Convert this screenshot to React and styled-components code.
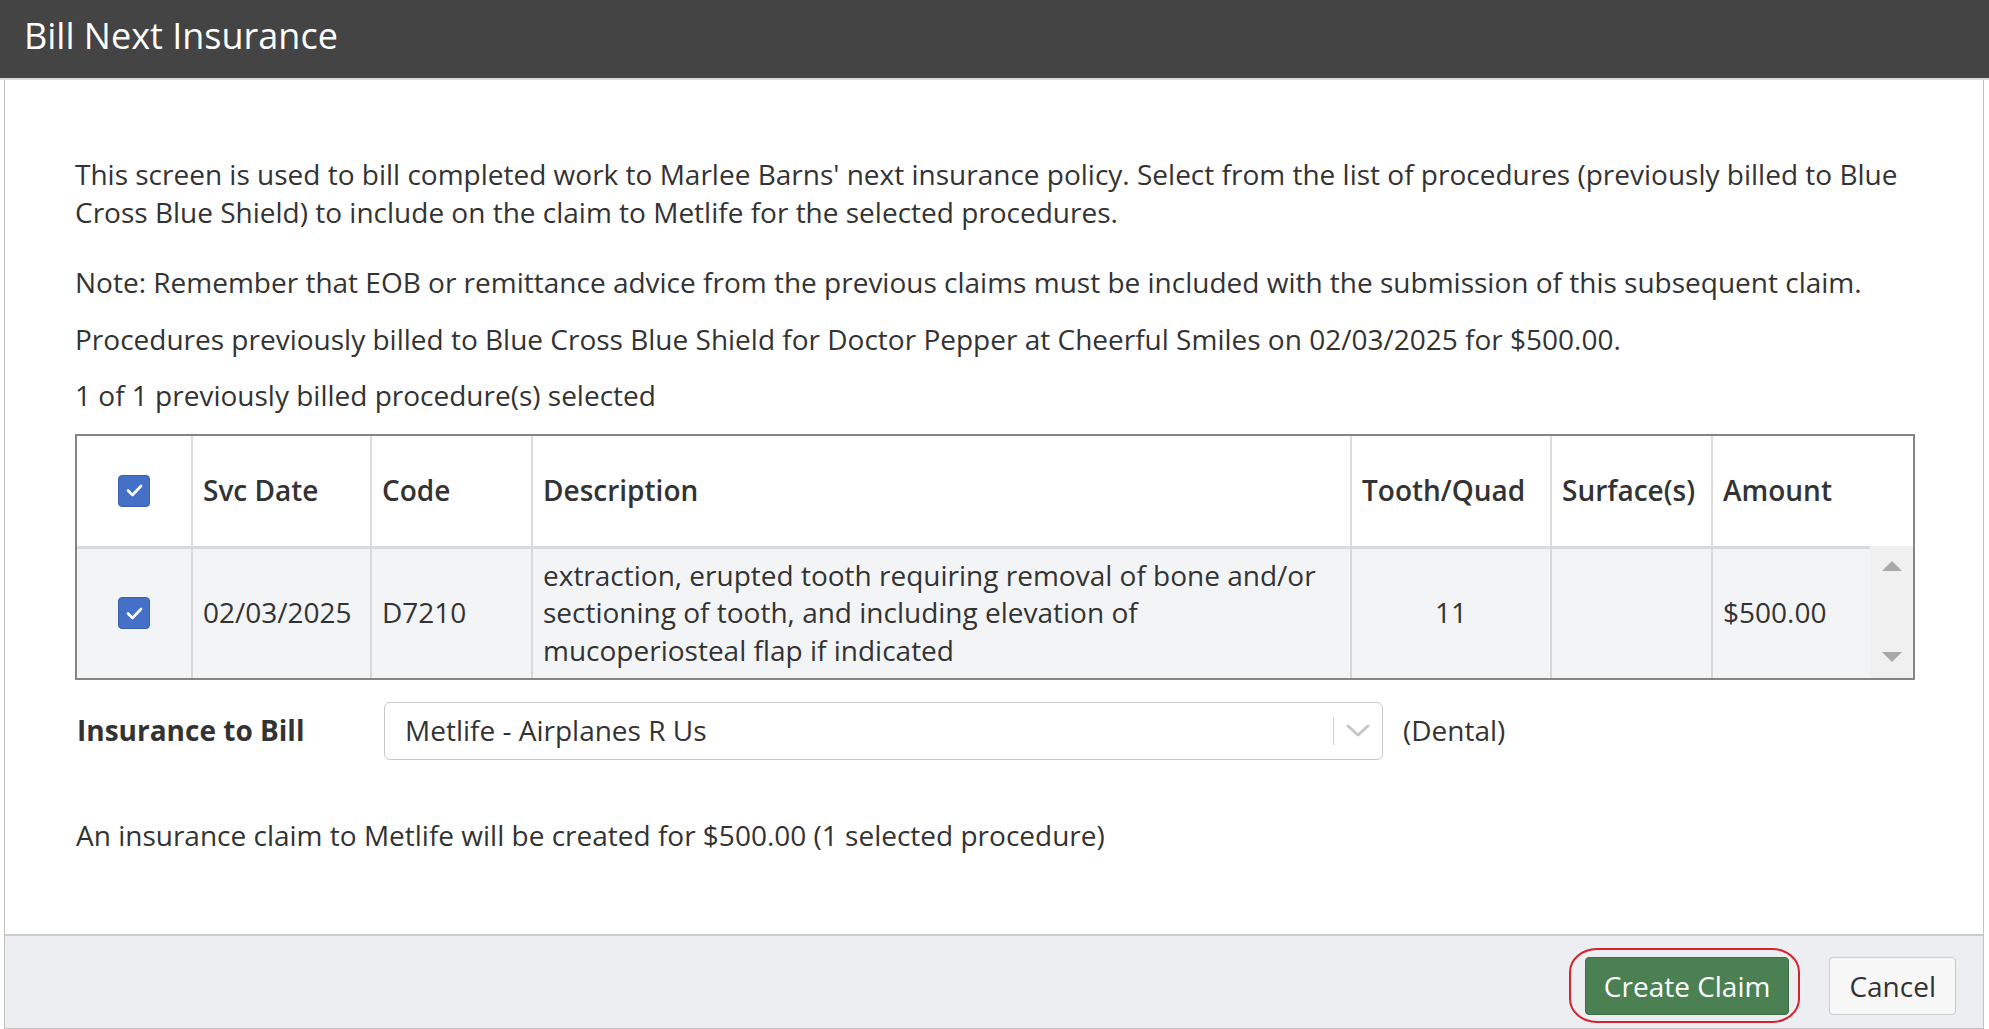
import styled, { createGlobalStyle } from "styled-components";

const GlobalStyle = createGlobalStyle`
  html, body {
    margin: 0;
    padding: 0;
    background: #ffffff;
  }
  body {
    font-family: "Open Sans", "Noto Sans", sans-serif;
    font-size: 28px;
    line-height: 37.5px;
    color: #333333;
  }
  * {
    box-sizing: border-box;
  }
`;

const procedures = [
  {
    date: "02/03/2025",
    code: "D7210",
    description:
      "extraction, erupted tooth requiring removal of bone and/or sectioning of tooth, and including elevation of mucoperiosteal flap if indicated",
    tooth: "11",
    surfaces: "",
    amount: "$500.00",
  },
];

const COLS = "114px 179px 161px 819px 200px 161px";

function Check() {
  return (
    <CheckBox>
      <svg width="17" height="13" viewBox="0 0 17 13" fill="none">
        <path
          d="M2 6.5 L6.5 11 L15 2"
          stroke="#ffffff"
          strokeWidth="2.6"
          strokeLinecap="round"
          strokeLinejoin="round"
        />
      </svg>
    </CheckBox>
  );
}

function App() {
  return (
    <Page>
      <GlobalStyle />
      <TitleBar>
        <Title>Bill Next Insurance</Title>
      </TitleBar>
      <Frame>
        <Content>
          <Intro>
            This screen is used to bill completed work to Marlee Barns' next
            insurance policy. Select from the list of procedures (previously
            billed to Blue Cross Blue Shield) to include on the claim to Metlife
            for the selected procedures.
          </Intro>
          <Para>
            Note: Remember that EOB or remittance advice from the previous
            claims must be included with the submission of this subsequent
            claim.
          </Para>
          <Para>
            Procedures previously billed to Blue Cross Blue Shield for Doctor
            Pepper at Cheerful Smiles on 02/03/2025 for $500.00.
          </Para>
          <Para>1 of 1 previously billed procedure(s) selected</Para>

          <Table>
            <HeadRow>
              <HeadCell $center>
                <Check />
              </HeadCell>
              <HeadCell>Svc Date</HeadCell>
              <HeadCell>Code</HeadCell>
              <HeadCell>Description</HeadCell>
              <HeadCell>Tooth/Quad</HeadCell>
              <HeadCell>Surface(s)</HeadCell>
              <HeadCell>Amount</HeadCell>
            </HeadRow>
            {procedures.map((p) => (
              <BodyRow key={p.code}>
                <Cell $center>
                  <Check />
                </Cell>
                <Cell>{p.date}</Cell>
                <Cell>{p.code}</Cell>
                <Cell $wrap>{p.description}</Cell>
                <Cell $center>{p.tooth}</Cell>
                <Cell>{p.surfaces}</Cell>
                <Cell>{p.amount}</Cell>
                <ScrollTrack>
                  <Arrow $up />
                  <Arrow />
                </ScrollTrack>
              </BodyRow>
            ))}
          </Table>

          <FieldRow>
            <FieldLabel>Insurance to Bill</FieldLabel>
            <Select>
              <SelectValue>Metlife - Airplanes R Us</SelectValue>
              <SelectDivider />
              <SelectChevron>
                <svg width="24" height="13" viewBox="0 0 24 13" fill="none">
                  <path
                    d="M2 2 L12 11 L22 2"
                    stroke="#c6c6c6"
                    strokeWidth="3"
                    strokeLinecap="round"
                    strokeLinejoin="round"
                  />
                </svg>
              </SelectChevron>
            </Select>
            <FieldNote>(Dental)</FieldNote>
          </FieldRow>

          <Summary>
            An insurance claim to Metlife will be created for $500.00 (1
            selected procedure)
          </Summary>
        </Content>
        <Footer>
          <Highlight>
            <Button $primary>Create Claim</Button>
          </Highlight>
          <Button>Cancel</Button>
        </Footer>
      </Frame>
    </Page>
  );
}

export default App;

const Page = styled.div`
  height: 100vh;
  display: flex;
  flex-direction: column;
`;

const TitleBar = styled.div`
  height: 80px;
  flex: none;
  background: #444444;
  border-bottom: 2px solid #dadada;
  display: flex;
  align-items: center;
  padding-left: 24px;
`;

const Title = styled.h1`
  margin: 0;
  font-size: 36px;
  font-weight: 400;
  color: #ffffff;
  line-height: 1;
  padding-bottom: 6px;
`;

const Frame = styled.div`
  flex: 1;
  display: flex;
  flex-direction: column;
  margin: 0 5px 0 4px;
  border-left: 1px solid #c2c2c2;
  border-right: 1px solid #c2c2c2;
`;

const Content = styled.div`
  flex: 1;
  padding: 76px 70px 0 70px;
`;

const Intro = styled.p`
  margin: 0 0 33px 0;
`;

const Para = styled.p`
  margin: 0 0 19px 0;
`;

const Table = styled.div`
  width: 1840px;
  border: 2px solid #858585;
`;

const HeadRow = styled.div`
  display: grid;
  grid-template-columns: ${COLS} 1fr;
  height: 110px;
  background: #ffffff;
`;

const HeadCell = styled.div`
  display: flex;
  align-items: center;
  justify-content: ${(p) => (p.$center ? "center" : "flex-start")};
  padding: 0 10px;
  font-weight: 600;
  white-space: nowrap;
  & + & {
    border-left: 2px solid #dcdcdc;
  }
`;

const BodyRow = styled.div`
  display: grid;
  grid-template-columns: ${COLS} 1fr 43px;
  height: 132px;
  background: #f3f4f6;
`;

const Cell = styled.div`
  display: flex;
  align-items: center;
  justify-content: ${(p) => (p.$center ? "center" : "flex-start")};
  padding: ${(p) => (p.$wrap ? "0 26px 0 10px" : "0 10px")};
  border-top: 3px solid #d9d9d9;
  & + & {
    border-left: 2px solid #d8d8d8;
  }
`;

const CheckBox = styled.span`
  width: 32px;
  height: 32px;
  border-radius: 4px;
  background: #4470c8;
  border: 1px solid #3a60b0;
  display: inline-flex;
  align-items: center;
  justify-content: center;
`;

const ScrollTrack = styled.div`
  background: #f0f0f0;
  display: flex;
  flex-direction: column;
  justify-content: space-between;
  align-items: center;
  padding: 15px 0 16px;
`;

const Arrow = styled.span`
  width: 0;
  height: 0;
  border-left: 10px solid transparent;
  border-right: 10px solid transparent;
  ${(p) =>
    p.$up
      ? "border-bottom: 10px solid #a8a8a8;"
      : "border-top: 10px solid #a8a8a8;"}
`;

const FieldRow = styled.div`
  display: flex;
  align-items: center;
  margin-top: 22px;
  padding-left: 2px;
`;

const FieldLabel = styled.label`
  width: 307px;
  font-weight: 700;
`;

const Select = styled.div`
  width: 999px;
  height: 58px;
  border: 1px solid #c9c9c9;
  border-radius: 6px;
  display: flex;
  align-items: center;
  padding-left: 20px;
  background: #ffffff;
`;

const SelectValue = styled.span`
  flex: 1;
`;

const SelectDivider = styled.span`
  width: 1px;
  height: 28px;
  background: #cccccc;
`;

const SelectChevron = styled.span`
  width: 48px;
  display: flex;
  justify-content: center;
  align-items: center;
`;

const FieldNote = styled.span`
  margin-left: 20px;
`;

const Summary = styled.p`
  margin: 57px 0 0 0;
  padding-left: 1px;
`;

const Footer = styled.div`
  height: 95px;
  flex: none;
  background: #edeef2;
  border-top: 2px solid #c9cacd;
  border-bottom: 1px solid #c2c2c2;
  display: flex;
  justify-content: flex-end;
  align-items: center;
  gap: 40px;
  padding: 8px 27px 0 0;
`;

const Highlight = styled.span`
  position: relative;
  display: inline-flex;
  &::after {
    content: "";
    position: absolute;
    left: -16px;
    right: -11px;
    top: -9px;
    bottom: -8px;
    border: 2px solid #d3232c;
    border-radius: 28px / 24px;
    pointer-events: none;
  }
`;

const Button = styled.button`
  height: 58px;
  padding: 0 ${(p) => (p.$primary ? "18px" : "19px")};
  font-family: inherit;
  font-size: 28px;
  border-radius: 4px;
  cursor: pointer;
  color: ${(p) => (p.$primary ? "#ffffff" : "#333333")};
  background: ${(p) => (p.$primary ? "#4a8052" : "#f7f7f8")};
  border: 1px solid ${(p) => (p.$primary ? "#3f6e46" : "#cacaca")};
`;
